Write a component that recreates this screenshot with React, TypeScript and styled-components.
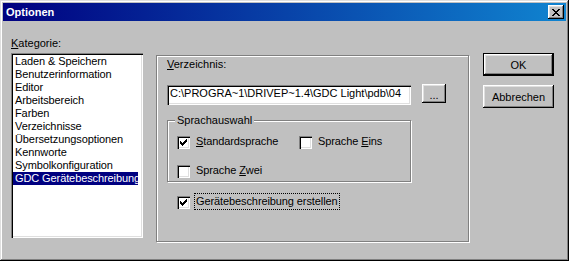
import React from 'react';
import styled, { createGlobalStyle } from 'styled-components';

const GlobalStyle = createGlobalStyle`
  html, body {
    margin: 0;
    padding: 0;
    background: #c0c0c0;
  }

  body {
    font-family: "Liberation Sans", Arial, sans-serif;
    font-size: 11px;
    color: #000;
  }
`;

const categories = [
  'Laden & Speichern',
  'Benutzerinformation',
  'Editor',
  'Arbeitsbereich',
  'Farben',
  'Verzeichnisse',
  'Übersetzungsoptionen',
  'Kennworte',
  'Symbolkonfiguration',
  'GDC Gerätebeschreibung',
];

const CHECK_PATH =
  'M6 0h1v1h-1z M5 1h2v1h-2z M0 2h1v1h-1z M4 2h3v1h-3z M0 3h2v1h-2z M3 3h3v1h-3z M0 4h5v1h-5z M1 5h3v1h-3z M2 6h1v1h-1z';

const CLOSE_PATH =
  'M0 0h2v1h-2z M6 0h2v1h-2z M1 1h2v1h-2z M5 1h2v1h-2z M2 2h4v1h-4z M3 3h2v1h-2z M2 4h4v1h-4z M1 5h2v1h-2z M5 5h2v1h-2z M0 6h2v1h-2z M6 6h2v1h-2z';

const raised = `
  box-shadow: inset -1px -1px #000, inset 1px 1px #fff,
    inset -2px -2px #808080, inset 2px 2px #dfdfdf;
`;

const sunken = `
  box-shadow: inset 1px 1px #808080, inset 2px 2px #000,
    inset -1px -1px #fff, inset -2px -2px #dfdfdf;
`;

const etched = `
  border: 1px solid #808080;
  box-shadow: inset 1px 1px #fff, 1px 1px #fff;
`;

interface ICheckProps {
  checked?: boolean;
  focused?: boolean;
  children: React.ReactNode;
}

const Check: React.FC<ICheckProps> = ({ checked, focused, children }) => (
  <CheckRow>
    <CheckBox>
      {checked && (
        <svg width="7" height="7" viewBox="0 0 7 7" shapeRendering="crispEdges">
          <path d={CHECK_PATH} fill="#000" />
        </svg>
      )}
    </CheckBox>
    <CheckLabel focused={focused}>{children}</CheckLabel>
  </CheckRow>
);

const App: React.FC = () => (
  <>
    <GlobalStyle />
    <Window>
      <TitleBar>
        <Title>Optionen</Title>
        <CloseButton aria-label="Schließen">
          <svg width="8" height="7" viewBox="0 0 8 7" shapeRendering="crispEdges">
            <path d={CLOSE_PATH} fill="#000" />
          </svg>
        </CloseButton>
      </TitleBar>

      <Body>
        <LeftColumn>
          <FieldLabel>
            <u>K</u>ategorie:
          </FieldLabel>
          <ListBox>
            {categories.map((name, i) => (
              <ListItem key={name} selected={i === categories.length - 1}>
                {name}
              </ListItem>
            ))}
          </ListBox>
        </LeftColumn>

        <Panel>
          <FieldLabel>
            <u>V</u>erzeichnis:
          </FieldLabel>
          <PathRow>
            <PathInput>C:\PROGRA~1\DRIVEP~1.4\GDC Light\pdb\04</PathInput>
            <BrowseButton>...</BrowseButton>
          </PathRow>

          <Group>
            <GroupTitle>Sprachauswahl</GroupTitle>
            <CheckGrid>
              <Check checked>
                <u>S</u>tandardsprache
              </Check>
              <Check>
                Sprache <u>E</u>ins
              </Check>
              <Check>
                Sprache <u>Z</u>wei
              </Check>
            </CheckGrid>
          </Group>

          <CreateRow>
            <Check checked focused>
              Gerätebeschreibung erstellen
            </Check>
          </CreateRow>
        </Panel>

        <ButtonColumn>
          <DialogButton isDefault>OK</DialogButton>
          <DialogButton>Abbrechen</DialogButton>
        </ButtonColumn>
      </Body>
    </Window>
  </>
);

const Window = styled.div`
  width: 569px;
  height: 261px;
  box-sizing: border-box;
  padding: 3px;
  background: #c0c0c0;
  box-shadow: inset -1px -1px #000, inset 1px 1px #dfdfdf,
    inset -2px -2px #808080, inset 2px 2px #fff;
  display: flex;
  flex-direction: column;
`;

const TitleBar = styled.div`
  height: 18px;
  display: flex;
  align-items: center;
  justify-content: space-between;
  padding: 0 2px 0 3px;
  background: linear-gradient(90deg, #000080, #1084d0);
`;

const Title = styled.span`
  color: #fff;
  font-weight: bold;
  font-size: 11px;
  line-height: 13px;
`;

const CloseButton = styled.button`
  width: 16px;
  height: 14px;
  padding: 0;
  border: 0;
  background: #c0c0c0;
  display: flex;
  align-items: center;
  justify-content: center;
  ${raised}

  svg {
    display: block;
  }
`;

const Body = styled.div`
  display: flex;
  align-items: flex-start;
  padding: 16px 0 0 8px;
`;

const LeftColumn = styled.div`
  width: 132px;
  display: flex;
  flex-direction: column;
`;

const FieldLabel = styled.div`
  line-height: 13px;
  height: 13px;
  white-space: nowrap;
`;

const ListBox = styled.div`
  margin-top: 3px;
  height: 185px;
  box-sizing: border-box;
  padding: 2px;
  background: #fff;
  ${sunken}
`;

const ListItem = styled.div<{ selected?: boolean }>`
  height: 13px;
  line-height: 13px;
  padding-left: 2px;
  margin-right: 3px;
  white-space: nowrap;
  letter-spacing: -0.1px;
  background: ${({ selected }) => (selected ? '#000080' : 'transparent')};
  color: ${({ selected }) => (selected ? '#fff' : '#000')};
`;

const Panel = styled.div`
  margin: 18px 0 0 13px;
  width: 313px;
  height: 187px;
  box-sizing: border-box;
  padding: 2px 0 0 10px;
  ${etched}
`;

const PathRow = styled.div`
  display: flex;
  align-items: flex-start;
  gap: 11px;
  margin-top: 14px;
`;

const PathInput = styled.div`
  width: 244px;
  height: 20px;
  box-sizing: border-box;
  padding: 2px 3px 0;
  line-height: 13px;
  background: #fff;
  white-space: nowrap;
  overflow: hidden;
  ${sunken}
`;

const BrowseButton = styled.button`
  width: 24px;
  height: 19px;
  margin-top: -1px;
  padding: 4px 0 0;
  border: 0;
  background: #c0c0c0;
  font: inherit;
  font-size: 11px;
  line-height: 13px;
  ${raised}
`;

const Group = styled.div`
  position: relative;
  margin-top: 15px;
  width: 244px;
  height: 62px;
  box-sizing: border-box;
  padding: 15px 0 0 9px;
  ${etched}
`;

const GroupTitle = styled.span`
  position: absolute;
  top: -7px;
  left: 7px;
  padding: 0 2px;
  line-height: 13px;
  background: #c0c0c0;
`;

const CheckGrid = styled.div`
  display: grid;
  grid-template-columns: 122px auto;
  row-gap: 15px;
`;

const CheckRow = styled.div`
  display: flex;
  align-items: flex-start;
  gap: 4px;
`;

const CheckBox = styled.span`
  width: 13px;
  height: 13px;
  box-sizing: border-box;
  flex: none;
  padding: 3px;
  background: #fff;
  ${sunken}

  svg {
    display: block;
  }
`;

const CheckLabel = styled.span<{ focused?: boolean }>`
  margin-top: -3px;
  padding: 0 1px 1px;
  line-height: 14px;
  white-space: nowrap;
  letter-spacing: -0.1px;
  border: 1px dotted ${({ focused }) => (focused ? '#000' : 'transparent')};
`;

const CreateRow = styled.div`
  margin: 14px 0 0 10px;
`;

const ButtonColumn = styled.div`
  margin: 16px 0 0 14px;
  display: flex;
  flex-direction: column;
  gap: 9px;
`;

const DialogButton = styled.button<{ isDefault?: boolean }>`
  width: 71px;
  height: 23px;
  box-sizing: border-box;
  padding: 0;
  background: #c0c0c0;
  font: inherit;
  font-size: 11px;
  color: #000;
  border: ${({ isDefault }) => (isDefault ? '1px solid #000' : '0')};
  ${raised}
`;

export default App;
